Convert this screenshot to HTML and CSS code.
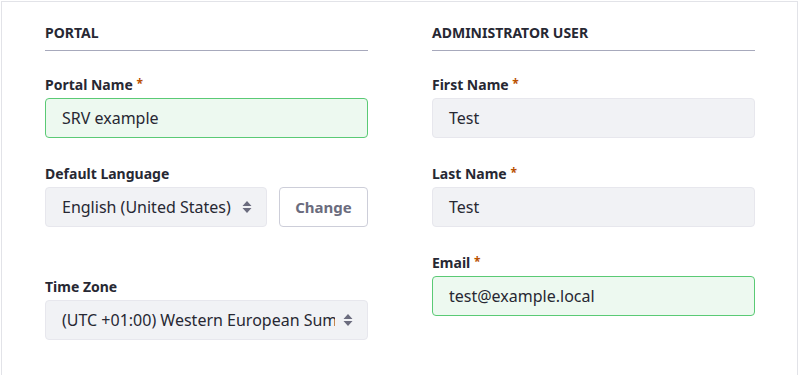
FILE: index.html
```html
<!DOCTYPE html>
<html lang="en">
<head>
    <meta charset="UTF-8">
    <meta name="viewport" content="width=device-width, initial-scale=1.0">
    <title>Basic Configuration</title>
    <link rel="stylesheet" href="styles.css">
</head>
<body>

    <div class="sheet">
        <div class="sheet-row">
            <div class="sheet-col">
                <h3 class="sheet-subtitle">Portal</h3>

                <div class="form-group">
                    <label>Portal Name <span class="req">*</span></label>
                    <div class="form-control is-valid">SRV example</div>
                </div>

                <div class="form-group form-group-spaced">
                    <label>Default Language</label>
                    <div class="input-row">
                        <div class="form-control select">
                            <span class="select-text">English (United States)</span>
                            <svg class="caret" width="10" height="14" viewBox="0 0 10 14"><path d="M5 1 L9.5 6 H0.5 Z M5 13 L9.5 8 H0.5 Z" fill="#6b6c7e"/></svg>
                        </div>
                        <button type="button" class="btn-secondary">Change</button>
                    </div>
                </div>

                <div class="form-group">
                    <label>Time Zone</label>
                    <div class="form-control select">
                        <span class="select-text">(UTC +01:00) Western European Summer Time</span>
                        <svg class="caret" width="10" height="14" viewBox="0 0 10 14"><path d="M5 1 L9.5 6 H0.5 Z M5 13 L9.5 8 H0.5 Z" fill="#6b6c7e"/></svg>
                    </div>
                </div>
            </div>

            <div class="sheet-col">
                <h3 class="sheet-subtitle">Administrator User</h3>

                <div class="form-group">
                    <label>First Name <span class="req">*</span></label>
                    <div class="form-control">Test</div>
                </div>

                <div class="form-group">
                    <label>Last Name <span class="req">*</span></label>
                    <div class="form-control">Test</div>
                </div>

                <div class="form-group">
                    <label>Email <span class="req">*</span></label>
                    <div class="form-control is-valid">test@example.local</div>
                </div>
            </div>
        </div>
    </div>

</body>
</html>
```

FILE: styles.css
```css
body {
    font-family: "Noto Sans", "Open Sans", sans-serif;
    margin: 0;
    padding: 0;
    background-color: #fff;
    color: #272833;
}
.sheet {
    margin: 1px 2px 0 1px;
    border: 1px solid #e2e3e8;
    border-bottom: none;
    height: 374px;
    box-sizing: border-box;
    padding: 21px 42px 0 43px;
}
.sheet-row {
    display: grid;
    grid-template-columns: 323px 323px;
    column-gap: 64px;
}
.sheet-subtitle {
    font-size: 14px;
    font-weight: 700;
    text-transform: uppercase;
    margin: 0 0 24px;
    padding-bottom: 7px;
    line-height: 20px;
    border-bottom: 1px solid #a7a9bc;
}
.form-group {
    margin-bottom: 26px;
}
.form-group-spaced {
    margin-bottom: 50px;
}
.form-group label {
    display: block;
    height: 20px;
    font-size: 14px;
    font-weight: 700;
    line-height: 20px;
    margin-bottom: 3px;
}
.req {
    color: #b95000;
    font-size: 12px;
    line-height: 0;
    vertical-align: 2px;
}
.form-control {
    height: 40px;
    box-sizing: border-box;
    background-color: #f1f2f5;
    border: 1px solid #e7e7ed;
    border-radius: 4px;
    padding: 0 16px;
    font-size: 16px;
    line-height: 38px;
    color: #272833;
}
.form-control.is-valid {
    background-color: #edf9f0;
    border-color: #5aca75;
}
.input-row {
    display: flex;
    gap: 12px;
}
.input-row .select {
    width: 222px;
}
.select {
    display: flex;
    align-items: center;
    padding-right: 14px;
}
.select-text {
    flex: 1;
    overflow: hidden;
    white-space: nowrap;
    margin-right: 8px;
}
.caret {
    flex: none;
}
.btn-secondary {
    width: 89px;
    height: 40px;
    background-color: #fff;
    border: 1px solid #cdced9;
    border-radius: 4px;
    color: #6b6c7e;
    font-family: inherit;
    font-size: 15px;
    font-weight: 700;
    cursor: pointer;
}
```
